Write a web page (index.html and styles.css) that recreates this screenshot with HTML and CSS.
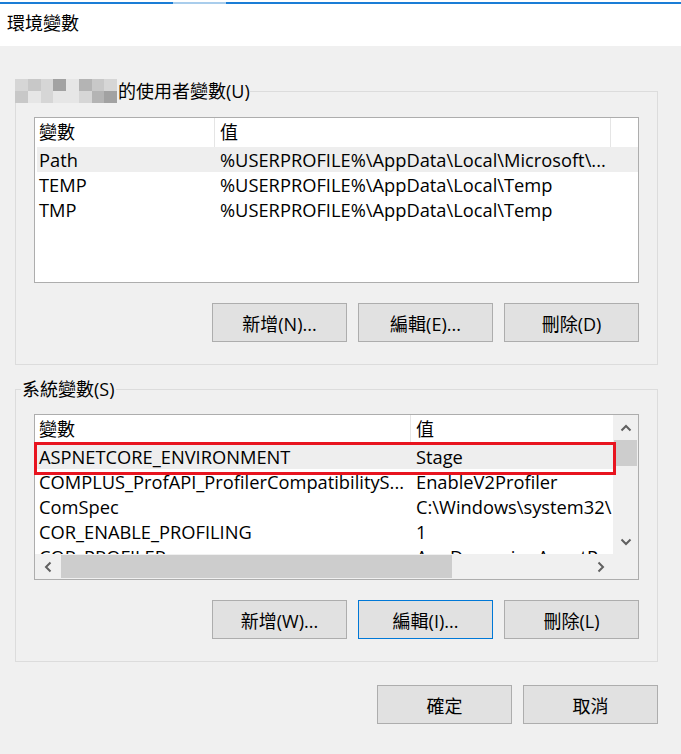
FILE: index.html
```html
<!DOCTYPE html>
<html lang="zh-Hant">
<head>
<meta charset="utf-8">
<title>環境變數</title>
<link rel="stylesheet" href="styles.css">
</head>
<body>
<div class="titlebar">
  <div class="accent"></div>
  <div class="title">環境變數</div>
</div>
<div class="dialog">
  <fieldset class="group group-user">
    <legend class="legend legend-user">
      <span class="blur">
        <i class="s2"></i><i class="s3"></i><i class="s2"></i><i class="s5"></i><i class="s1"></i><i class="s4"></i><i class="s3"></i><i class="s2"></i>
        <i class="s3"></i><i class="s1"></i><i class="s2"></i><i class="s1"></i><i class="s1"></i><i class="s2"></i><i class="s4"></i><i class="s5"></i>
      </span>
      <span class="legend-text">的使用者變數(U)</span>
    </legend>
    <div class="group-body">
      <div class="list list-user">
        <div class="lv-head">
          <div class="hcell u1">變數</div>
          <div class="hcell u2">值</div>
        </div>
        <div class="lv-row selected"><span class="cell u1">Path</span><span class="cell u2">%USERPROFILE%\AppData\Local\Microsoft\...</span></div>
        <div class="lv-row"><span class="cell u1">TEMP</span><span class="cell u2">%USERPROFILE%\AppData\Local\Temp</span></div>
        <div class="lv-row"><span class="cell u1">TMP</span><span class="cell u2">%USERPROFILE%\AppData\Local\Temp</span></div>
      </div>
      <div class="btn-row">
        <button class="btn">新增(N)...</button>
        <button class="btn">編輯(E)...</button>
        <button class="btn">刪除(D)</button>
      </div>
    </div>
  </fieldset>

  <fieldset class="group group-sys">
    <legend class="legend legend-sys">系統變數(S)</legend>
    <div class="group-body">
      <div class="list list-sys">
        <div class="lv-area">
          <div class="lv-head">
            <div class="hcell s1c">變數</div>
            <div class="hcell s2c">值</div>
          </div>
          <div class="lv-row selected"><span class="cell s1c">ASPNETCORE_ENVIRONMENT</span><span class="cell s2c">Stage</span></div>
          <div class="lv-row"><span class="cell s1c">COMPLUS_ProfAPI_ProfilerCompatibilityS...</span><span class="cell s2c">EnableV2Profiler</span></div>
          <div class="lv-row"><span class="cell s1c">ComSpec</span><span class="cell s2c clip">C:\Windows\system32\</span></div>
          <div class="lv-row"><span class="cell s1c">COR_ENABLE_PROFILING</span><span class="cell s2c">1</span></div>
          <div class="lv-row"><span class="cell s1c">COR_PROFILER</span><span class="cell s2c clip">AppDynamics.AgentP</span></div>
        </div>
        <div class="vscroll">
          <div class="sb-btn"><svg width="12" height="8" viewBox="0 0 12 8"><polyline points="1.5,6.5 6,2 10.5,6.5" fill="none" stroke="#606060" stroke-width="2"/></svg></div>
          <div class="vthumb"></div>
          <div class="sb-track"></div>
          <div class="sb-btn"><svg width="12" height="8" viewBox="0 0 12 8"><polyline points="1.5,1.5 6,6 10.5,1.5" fill="none" stroke="#606060" stroke-width="2"/></svg></div>
        </div>
        <div class="hscroll">
          <div class="sb-btn"><svg width="8" height="12" viewBox="0 0 8 12"><polyline points="6.5,1.5 2,6 6.5,10.5" fill="none" stroke="#606060" stroke-width="2"/></svg></div>
          <div class="hthumb"></div>
          <div class="sb-track"></div>
          <div class="sb-btn"><svg width="8" height="12" viewBox="0 0 8 12"><polyline points="1.5,1.5 6,6 1.5,10.5" fill="none" stroke="#606060" stroke-width="2"/></svg></div>
        </div>
        <div class="sb-corner"></div>
        <div class="highlight-box"></div>
      </div>
      <div class="btn-row">
        <button class="btn">新增(W)...</button>
        <button class="btn focused">編輯(I)...</button>
        <button class="btn">刪除(L)</button>
      </div>
    </div>
  </fieldset>

  <div class="footer">
    <button class="btn">確定</button>
    <button class="btn">取消</button>
  </div>
</div>
</body>
</html>
```

FILE: styles.css
```css
* { box-sizing: border-box; }

html, body { margin: 0; padding: 0; }

body {
  width: 681px;
  height: 754px;
  overflow: hidden;
  background: #f0f0f0;
  color: #000;
  font-family: "Open Sans", "Noto Sans CJK TC", sans-serif;
  font-size: 18.3px;
}

/* title bar */
.titlebar {
  height: 46px;
  background: #fff;
  padding-top: 2px;
}
.accent {
  height: 2px;
  background: linear-gradient(to right, #1a7dd6 0, #1a7dd6 173px, #a9cdec 173px, #a9cdec 226px, #1a7dd6 226px);
}
.title {
  height: 38px;
  line-height: 38px;
  padding-left: 7px;
  font-size: 18px;
}

/* dialog */
.dialog {
  padding: 0 23px 0 15px;
}

.group {
  margin: 0;
  padding: 0;
  min-width: 0;
  border: 1px solid #dcdcdc;
}
.group-user { margin-top: 33px; }
.group-sys { margin-top: 13px; }

.legend {
  padding: 0;
  font-size: 18px;
}
.legend-user {
  margin-left: -1px;
  height: 24px;
  display: flex;
  align-items: center;
}
.legend-sys {
  margin-left: 5px;
  height: 22px;
  line-height: 22px;
  padding: 0 1px;
}
.legend-text {
  margin-left: 1px;
  line-height: 22px;
}

.blur {
  display: grid;
  grid-template-columns: repeat(8, 1fr);
  width: 102px;
  height: 24px;
}
.blur i { display: block; }
.s1 { background: #e6e6e6; }
.s2 { background: #d6d6d6; }
.s3 { background: #c8c8c8; }
.s4 { background: #b4b4b4; }
.s5 { background: #a2a2a2; }

.group-body {
  padding: 14px 18px 22px 18px;
}

/* list views */
.list {
  position: relative;
  height: 166px;
  background: #fff;
  border: 1px solid #adadad;
}

.lv-head {
  display: flex;
  height: 29px;
}
.hcell {
  height: 29px;
  line-height: 29px;
  padding-left: 4px;
  border-right: 1px solid #e5e5e5;
  font-size: 18px;
}

.lv-row {
  display: flex;
  height: 25px;
  line-height: 25px;
  margin-left: 2px;
}
.lv-row.selected { background: #eeeeee; }

.cell {
  display: block;
  white-space: nowrap;
  overflow: hidden;
  text-overflow: ellipsis;
  padding-left: 2px;
}
.cell + .cell { padding-left: 5px; padding-right: 2px; }
.cell.clip { text-overflow: clip; }

.hcell.u1 { width: 180px; }
.hcell.u2 { width: 396px; padding-left: 5px; }
.cell.u1 { width: 178px; }
.cell.u2 { width: 396px; }

.list-sys {
  display: grid;
  grid-template-columns: 1fr 25px;
  grid-template-rows: 1fr 25px;
}
.lv-area {
  overflow: hidden;
  min-width: 0;
}
.hcell.s1c { width: 376px; }
.hcell.s2c { width: 201px; padding-left: 5px; border-right: none; }
.cell.s1c { width: 374px; padding-right: 2px; }
.cell.s2c { width: 201px; padding-right: 0; }

/* scrollbars */
.vscroll {
  display: flex;
  flex-direction: column;
  background: #f0f0f0;
}
.hscroll {
  display: flex;
  background: #f0f0f0;
}
.sb-btn {
  flex: 0 0 25px;
  height: 25px;
  width: 25px;
  display: flex;
  align-items: center;
  justify-content: center;
}
.sb-track { flex: 1; }
.vthumb {
  height: 26px;
  margin: 0 1px;
  background: #cdcdcd;
}
.hthumb {
  width: 391px;
  margin: 1px 0 1px 1px;
  background: #cdcdcd;
}
.sb-corner { background: #f0f0f0; }

.highlight-box {
  position: absolute;
  left: -1px;
  top: 27px;
  width: 582px;
  height: 33px;
  border: 3px solid #e8141f;
  pointer-events: none;
}

/* buttons */
.btn-row, .footer {
  display: flex;
  justify-content: flex-end;
  gap: 11px;
}
.btn-row { margin-top: 20px; }
.footer { margin-top: 23px; }

.btn {
  width: 135px;
  height: 39px;
  margin: 0;
  padding: 0;
  background: #e1e1e1;
  border: 1px solid #adadad;
  border-radius: 0;
  font-family: "Open Sans", "Noto Sans CJK TC", sans-serif;
  font-size: 18px;
  color: #000;
}
.btn.focused { border-color: #0078d7; }
```
